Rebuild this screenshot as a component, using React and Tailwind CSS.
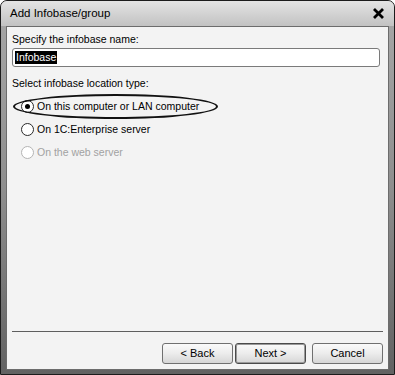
const FONT = { fontFamily: '"Liberation Sans", Arial, sans-serif' }

function Radio({ checked, disabled }) {
  return (
    <span
      className={`flex h-[13px] w-[13px] items-center justify-center rounded-full border bg-white ${
        disabled ? 'border-[#b4b4b4] bg-[#f4f4f4]' : 'border-[#2a2a2a]'
      }`}
    >
      {checked && <span className="h-[5px] w-[5px] rounded-full bg-black" />}
    </span>
  )
}

function Button({ children, primary, className = '' }) {
  return (
    <button
      className={`h-[21px] w-[71px] rounded-[3px] bg-gradient-to-b from-[#fafafa] via-[#ececec] to-[#d6d6d6] text-[11px] text-black ${
        primary ? 'border border-[#4a4a4a] shadow-[inset_0_0_0_1px_#9a9a9a]' : 'border border-[#707070]'
      } ${className}`}
    >
      {children}
    </button>
  )
}

export default function App() {
  return (
    <div className="h-[375px] w-[395px] bg-white" style={FONT}>
      <div className="flex h-full flex-col overflow-hidden rounded-t-[7px] border border-[#1c1c1c] bg-gradient-to-b from-[#a8a8a8] via-[#8e8e8e] to-[#626262]">
        {/* title bar */}
        <div className="flex h-[25px] items-center justify-between bg-gradient-to-b from-[#e4e4e4] to-[#c2c2c2] pl-[9px] pr-[9px]">
          <span className="text-[11.5px] text-black">Add Infobase/group</span>
          <svg width="13" height="13" viewBox="0 0 13 13">
            <path d="M2 2 L11 11 M11 2 L2 11" stroke="#000" strokeWidth="2.8" />
          </svg>
        </div>

        {/* client area */}
        <div className="mx-[5px] mb-[4px] flex flex-1 flex-col border border-[#6c6c6c] bg-[#f3f3f3] text-[10.5px] text-black">
          <div className="pl-[5px] pt-[6px] leading-[13px]">Specify the infobase name:</div>
          <div className="ml-[5px] mt-[2px] flex h-[19px] w-[368px] items-center rounded-[3px] border border-[#7a7a7a] bg-white px-[2px]">
            <span className="bg-black px-px leading-[13px] text-white">Infobase</span>
          </div>

          <div className="pl-[5px] pt-[10px] leading-[13px]">Select infobase location type:</div>

          <div className="relative mt-[5px] flex h-[23px] items-center gap-[3px] pl-[14px]">
            <Radio checked />
            <span>On this computer or LAN computer</span>
            <span className="absolute left-[6px] top-[-1px] h-[25px] w-[205px] rounded-[50%] border-2 border-[#111]" />
          </div>
          <div className="flex h-[23px] items-center gap-[3px] pl-[14px]">
            <Radio />
            <span>On 1C:Enterprise server</span>
          </div>
          <div className="flex h-[23px] items-center gap-[3px] pl-[14px] text-[#a2a2a2]">
            <Radio disabled />
            <span>On the web server</span>
          </div>

          <div className="flex-1" />

          <div className="ml-[5px] mr-[5px] h-px bg-[#5e5e5e]" />
          <div className="flex justify-end gap-[2px] pb-[5px] pr-[5px] pt-[11px]">
            <Button>&lt; Back</Button>
            <Button primary>Next &gt;</Button>
            <Button className="ml-[4px]">Cancel</Button>
          </div>
        </div>
      </div>
    </div>
  )
}
